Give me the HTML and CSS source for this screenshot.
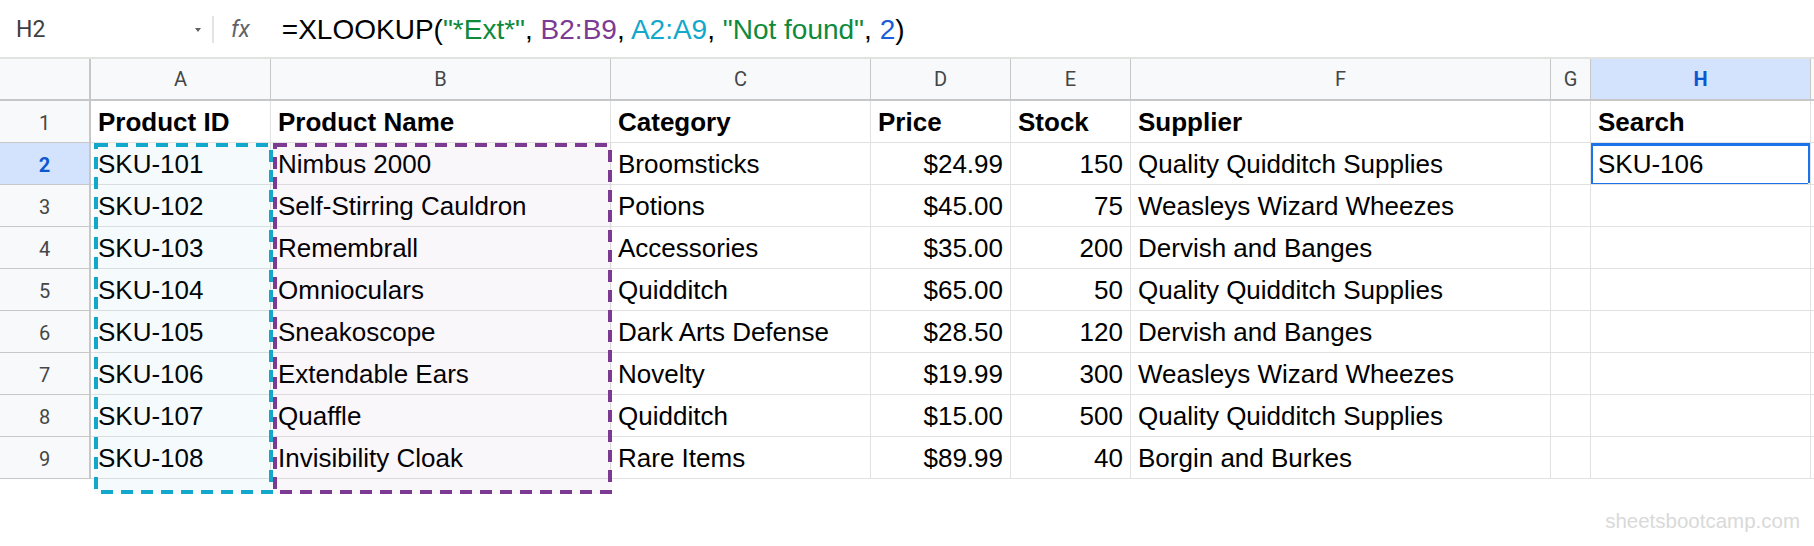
FILE: index.html
```html
<!DOCTYPE html>
<html>
<head>
<meta charset="utf-8">
<link rel="stylesheet" href="styles.css">
</head>
<body>
<div class="formula-bar">
  <div class="namebox"><span class="ref">H2</span><span class="caret"></span></div>
  <div class="sep"></div>
  <div class="fx">fx</div>
  <div class="formula">=XLOOKUP(<span class="str">"*Ext*"</span>, <span class="rb">B2:B9</span>, <span class="ra">A2:A9</span>, <span class="str">"Not found"</span>, <span class="num">2</span>)</div>
</div>
<div class="sheet">
  <div class="grid">
    <div class="ch corner"></div>
    <div class="ch">A</div><div class="ch">B</div><div class="ch">C</div><div class="ch">D</div><div class="ch">E</div><div class="ch">F</div><div class="ch">G</div><div class="ch selh">H</div><div class="ch"></div>

    <div class="rh">1</div>
    <div class="c b">Product ID</div><div class="c b">Product Name</div><div class="c b">Category</div><div class="c b">Price</div><div class="c b">Stock</div><div class="c b">Supplier</div><div class="c"></div><div class="c b">Search</div><div class="c"></div>

    <div class="rh selh">2</div>
    <div class="c">SKU-101</div><div class="c">Nimbus 2000</div><div class="c">Broomsticks</div><div class="c r">$24.99</div><div class="c r">150</div><div class="c">Quality Quidditch Supplies</div><div class="c"></div><div class="c sel">SKU-106</div><div class="c"></div>

    <div class="rh">3</div>
    <div class="c">SKU-102</div><div class="c">Self-Stirring Cauldron</div><div class="c">Potions</div><div class="c r">$45.00</div><div class="c r">75</div><div class="c">Weasleys Wizard Wheezes</div><div class="c"></div><div class="c"></div><div class="c"></div>

    <div class="rh">4</div>
    <div class="c">SKU-103</div><div class="c">Remembrall</div><div class="c">Accessories</div><div class="c r">$35.00</div><div class="c r">200</div><div class="c">Dervish and Banges</div><div class="c"></div><div class="c"></div><div class="c"></div>

    <div class="rh">5</div>
    <div class="c">SKU-104</div><div class="c">Omnioculars</div><div class="c">Quidditch</div><div class="c r">$65.00</div><div class="c r">50</div><div class="c">Quality Quidditch Supplies</div><div class="c"></div><div class="c"></div><div class="c"></div>

    <div class="rh">6</div>
    <div class="c">SKU-105</div><div class="c">Sneakoscope</div><div class="c">Dark Arts Defense</div><div class="c r">$28.50</div><div class="c r">120</div><div class="c">Dervish and Banges</div><div class="c"></div><div class="c"></div><div class="c"></div>

    <div class="rh">7</div>
    <div class="c">SKU-106</div><div class="c">Extendable Ears</div><div class="c">Novelty</div><div class="c r">$19.99</div><div class="c r">300</div><div class="c">Weasleys Wizard Wheezes</div><div class="c"></div><div class="c"></div><div class="c"></div>

    <div class="rh">8</div>
    <div class="c">SKU-107</div><div class="c">Quaffle</div><div class="c">Quidditch</div><div class="c r">$15.00</div><div class="c r">500</div><div class="c">Quality Quidditch Supplies</div><div class="c"></div><div class="c"></div><div class="c"></div>

    <div class="rh">9</div>
    <div class="c">SKU-108</div><div class="c">Invisibility Cloak</div><div class="c">Rare Items</div><div class="c r">$89.99</div><div class="c r">40</div><div class="c">Borgin and Burkes</div><div class="c"></div><div class="c"></div><div class="c"></div>
  </div>

  <div class="range range-a">
    <svg width="179" height="351" viewBox="0 0 179 351"><rect x="2" y="2" width="175" height="347" fill="none" stroke="#12a8cb" stroke-width="4" stroke-dasharray="12 8"/></svg>
  </div>
  <div class="range range-b">
    <svg width="339" height="351" viewBox="0 0 339 351"><rect x="2" y="2" width="335" height="347" fill="none" stroke="#7d3a93" stroke-width="4" stroke-dasharray="12 8"/></svg>
  </div>
</div>
<div class="footer"><span class="watermark">sheetsbootcamp.com</span></div>
</body>
</html>
```

FILE: styles.css
```css
html, body {
  margin: 0;
  padding: 0;
  background: #ffffff;
}
body {
  width: 1814px;
  height: 546px;
  overflow: hidden;
  font-family: "Liberation Sans", Arial, sans-serif;
  color: #000;
}

/* formula bar */
.formula-bar {
  height: 57px;
  display: flex;
  align-items: center;
  border-bottom: 2px solid #e1e3e1;
}
.namebox {
  width: 212px;
  box-sizing: border-box;
  padding: 0 11px 0 16px;
  display: flex;
  align-items: center;
  justify-content: space-between;
}
.ref {
  font-family: Roboto, "Liberation Sans", sans-serif;
  font-size: 23px;
  color: #3c4043;
  padding-top: 2px;
}
.caret {
  width: 0;
  height: 0;
  border-left: 3px solid transparent;
  border-right: 3px solid transparent;
  border-top: 4px solid #5f6368;
  margin-top: 2px;
}
.sep {
  width: 2px;
  height: 27px;
  background: #e3e3e3;
  margin-top: 2px;
}
.fx {
  margin-left: 17px;
  font-family: Roboto, "Liberation Sans", sans-serif;
  font-style: italic;
  font-size: 23px;
  color: #5f6368;
  padding-top: 2px;
}
.formula {
  margin-left: 32px;
  font-size: 28px;
  color: #000;
  white-space: nowrap;
  padding-top: 2px;
}
.str { color: #0e8a3c; }
.rb { color: #7d3a93; }
.ra { color: #12a8cb; }
.num { color: #1a5dd6; }

/* sheet */
.sheet {
  position: relative;
}
.grid {
  display: grid;
  grid-template-columns: 91px 180px 340px 260px 140px 120px 420px 40px 220px 1fr;
  grid-auto-rows: 42px;
}
.ch, .rh, .c {
  box-sizing: border-box;
  white-space: nowrap;
  overflow: hidden;
}
.ch {
  background: #f8f9fa;
  border-right: 1px solid #c7c7c7;
  border-bottom: 2px solid #c7c7c7;
  display: flex;
  align-items: center;
  justify-content: center;
  font-family: Roboto, "Liberation Sans", sans-serif;
  font-size: 20px;
  color: #444746;
}
.ch.corner {
  border-right: 2px solid #c7c7c7;
}
.rh {
  background: #f8f9fa;
  border-right: 2px solid #c7c7c7;
  border-bottom: 1px solid #c7c7c7;
  display: flex;
  align-items: center;
  justify-content: center;
  font-family: Roboto, "Liberation Sans", sans-serif;
  font-size: 20px;
  color: #444746;
  padding-top: 2px;
}
.selh {
  background: #d3e3fd;
  color: #0b57d0;
  font-weight: bold;
}
.c {
  border-right: 1px solid #e1e1e1;
  border-bottom: 1px solid #e1e1e1;
  display: flex;
  align-items: flex-end;
  padding: 0 7px 5px 7px;
  font-size: 26px;
  line-height: 30px;
}
.c.b { font-weight: bold; }
.c.r { justify-content: flex-end; }
.c.sel { position: relative; }
.c.sel::after {
  content: "";
  position: absolute;
  left: -1px;
  top: 0;
  right: -1px;
  bottom: -2px;
  border: 3px solid #1a73e8;
}
.c.sel::before {
  content: "";
  position: absolute;
  right: 0;
  bottom: -1px;
  width: 2px;
  height: 2px;
  background: #e8f0fe;
  z-index: 2;
}

/* referenced ranges (overlay) */
.range {
  position: absolute;
  top: 84px;
  height: 351px;
  pointer-events: none;
}
.range svg { display: block; }
.range-a {
  left: 94px;
  width: 179px;
  background: rgba(18, 168, 203, 0.045);
}
.range-b {
  left: 273px;
  width: 339px;
  background: rgba(125, 58, 147, 0.04);
}

/* watermark */
.footer {
  display: flex;
  justify-content: flex-end;
  padding: 30px 14px 0 0;
}
.watermark {
  font-size: 20.5px;
  line-height: 24px;
  color: #d9d9d9;
}
```
